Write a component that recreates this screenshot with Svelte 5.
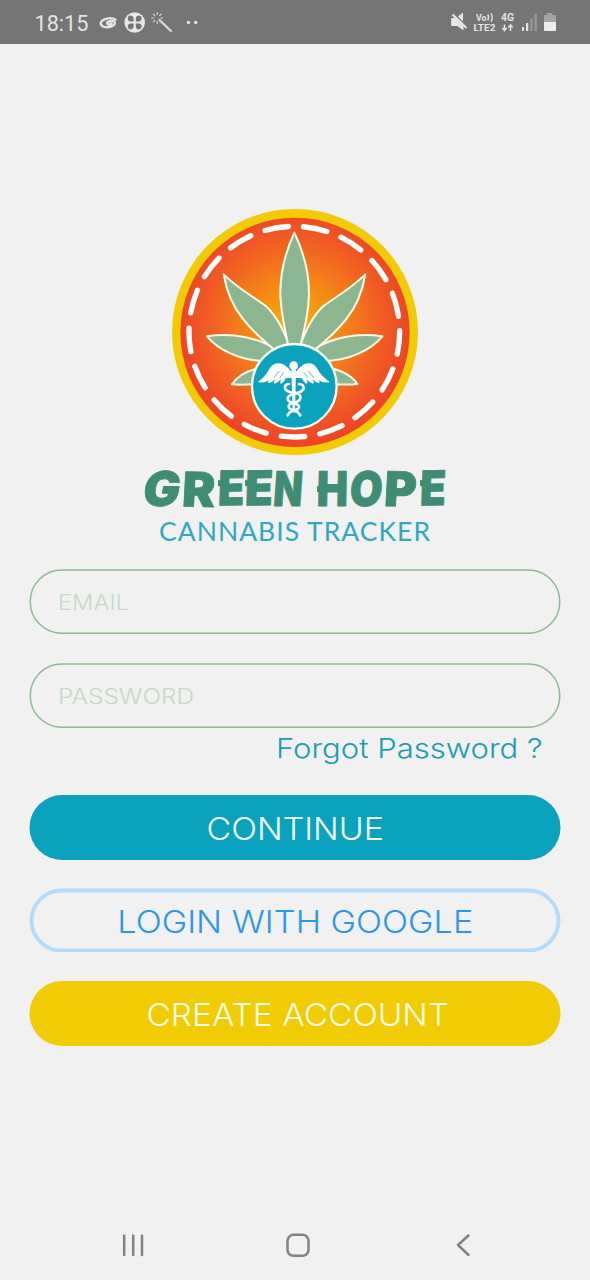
<script>
  const title = [
    { c: 'G', x: 141, s: 1.02, y: 506, r: 0, k: -9 },
    { c: 'R', x: 181.5, s: 1.03, y: 506.5, r: 1, k: -2 },
    { c: 'E', x: 217.5, s: 0.9, y: 505.5, r: -1, k: -3 },
    { c: 'E', x: 244.5, s: 0.95, y: 505.5, r: -1, k: -3 },
    { c: 'N', x: 272.5, s: 0.79, y: 505.5, r: 0, k: -4 },
    { c: 'H', x: 316.5, s: 0.87, y: 505.5, r: 0, k: -1 },
    { c: 'O', x: 348.5, s: 0.88, y: 505.5, r: 0, k: -5 },
    { c: 'P', x: 383.5, s: 1.03, y: 506, r: 1, k: -2 },
    { c: 'E', x: 419.5, s: 0.88, y: 505.5, r: -1, k: -3 }
  ];
  const fields = [
    { text: 'EMAIL', x: 29, w: 71 },
    { text: 'PASSWORD', x: 29, w: 136 }
  ];
  const rays = [0, 45, 90, 135, 180, 225, 270, 315];
</script>

<div class="screen">
  <header class="status">
    <svg width="590" height="44" viewBox="0 0 590 44">
      <text class="clock" x="34.5" y="30.5" textLength="54" lengthAdjust="spacingAndGlyphs">18:15</text>
      <path fill="none" stroke="#e4e4e4" stroke-linecap="round" stroke-width="2.4" d="M115.500 19.500C111 16.500 102 19 100.800 22.800C100 27 106.500 28 111 26.500C116 24.800 116 21 112 21C108.500 21 106 22.800 107.500 24C108.500 24.700 110.500 24.300 111.500 23.500" />
      <circle cx="134.700" cy="22.500" r="10.300" fill="#e8e8e8" />
      <path fill="#757575" d="M133.600 21.400h-3.200a2.900 2.900 0 1 1 3.200-3.200zM135.800 21.400v-3.200a2.900 2.900 0 1 1 3.200 3.200zM133.600 23.600v3.200a2.900 2.900 0 1 1-3.200-3.200zM135.800 23.600h3.200a2.900 2.900 0 1 1-3.200 3.200z" />
      <path d="M159.500 20l11.500 11" stroke="#dedede" stroke-width="2.200" stroke-linecap="round" />
      {#each rays as r}
        <path d="M157.300 14.500v-2" transform={`rotate(${r} 157.300 18)`} stroke="#d4d4d4" stroke-width="1.200" stroke-linecap="round" />
      {/each}
      <circle cx="188.500" cy="22.500" r="1.700" fill="#e4e4e4" />
      <circle cx="195.700" cy="22.500" r="1.700" fill="#e4e4e4" />

      <path d="M451.200 18h3.800l8.500 8.500v4l-6-4.500h-6.300zM458 16.500l5-4v9z" fill="#e6e6e6" />
      <path d="M452.500 14.500l14 13.500" stroke="#e6e6e6" stroke-width="2.200" />
      <text class="net" x="476" y="20.500" textLength="10.500" lengthAdjust="spacingAndGlyphs">Vo</text>
      <path d="M487.700 14.500q2 2.800 0 5.800M490.900 13.300q3 4 0 8.200" fill="none" stroke="#e2e2e2" stroke-width="1.400" />
      <text class="net" x="473.500" y="30.500" textLength="22" lengthAdjust="spacingAndGlyphs">LTE2</text>
      <text class="net g4" x="501" y="21" textLength="13" lengthAdjust="spacingAndGlyphs">4G</text>
      <path d="M504.500 24.500v5.500M502.300 28l2.200 2.500 2.200-2.500M510.500 31v-5.500M508.300 27.500l2.200-2.500 2.200 2.500" fill="none" stroke="#e2e2e2" stroke-width="1.500" />
      <rect x="522" y="27" width="2" height="4" fill="#e2e2e2" />
      <rect x="526" y="23" width="2.300" height="8" fill="#e2e2e2" />
      <rect x="530.300" y="18.500" width="2.300" height="12.500" fill="#999" />
      <rect x="534.500" y="14" width="2.300" height="17" fill="#999" />
      <path d="M547 13h5.500v2h3.500v7h-12v-7h3z" fill="#a4a4a4" />
      <path d="M544 22h12v8q0 1-1 1h-10q-1 0-1-1z" fill="#ececec" />
    </svg>
  </header>

  <main>
    <svg class="logo" width="260" height="260" viewBox="0 0 780 780">
      <defs>
        <radialGradient id="sun" gradientUnits="userSpaceOnUse" cx="390" cy="380" r="345">
          <stop offset="0" stop-color="#f9b208" />
          <stop offset=".35" stop-color="#f58d14" />
          <stop offset=".7" stop-color="#f16422" />
          <stop offset="1" stop-color="#ee4526" />
        </radialGradient>
      </defs>
      <circle cx="390" cy="396" r="369" fill="#f2cb05" />
      <circle cx="390" cy="397" r="344" fill="url(#sun)" />
      <circle cx="388" cy="395" r="316" fill="none" stroke="#fff" stroke-width="16" stroke-linecap="round" stroke-dasharray="71 45.794" transform="rotate(-.5 388 395)" />
      <g fill="#8cb592" stroke="#fffbe8" stroke-width="6" stroke-linejoin="round">
        <path d="M290 502C250 510 218 526 201 553Q230 556 285 551zM486 502C526 510 560 526 577 552Q550 556 495 551z" />
        <path d="M335 450C285 415 205 396 126 409C160 450 225 482 300 483zM443 450C493 415 573 396 652 409C618 450 553 482 478 483z" />
        <path d="M374 440C357 392 336 350 305 320C268 292 218 265 176 223C184 270 205 322 235 358C262 392 292 420 335 455zM404 440C421 392 442 350 473 320C510 292 559 265 601 223C593 270 573 322 543 358C516 392 486 420 443 455z" />
        <path d="M388 98C364 150 345 215 346 285C348 340 358 385 372 445H404C419 385 430 340 432 285C433 215 413 150 388 98z" />
      </g>
      <circle cx="388" cy="559" r="127" fill="#0ba2bd" stroke="#f8fffb" stroke-width="7" />
      <g fill="#fff">
        <circle cx="386" cy="497" r="13" />
        <path d="M379 509h14l-3 128h-7z" />
        <path d="M382 518Q373 505 355 493Q331 483 315 503Q303 527 279 546Q296 551 311 541Q307 549 310 550Q322 548 330 538Q324 549 329 551Q341 547 348 537Q342 550 350 551Q358 546 362 535Q370 534 382 533zM390 518Q399 505 417 493Q441 483 455 503Q468 527 494 546Q477 551 462 541Q466 549 463 550Q451 548 443 538Q449 549 444 551Q432 547 425 537Q431 550 423 551Q415 546 410 535Q402 534 390 533z" />
      </g>
      <path d="M327 533l16-20M344 534l12-17M446 533l-16-20M429 534l-12-17" stroke="#0ba2bd" stroke-width="2" />
      <g fill="none" stroke="#fff" stroke-width="8" stroke-linecap="round">
        <path d="M372 552Q356 553 361 568Q370 578 391 578Q412 585 405 599Q397 608 381 609Q365 616 374 626L398 636L406 646" />
        <path d="M402 552Q419 553 415 568Q407 578 388 581Q364 587 369 600Q377 610 394 612Q408 619 398 627L374 637L368 646" />
      </g>
    </svg>

    <svg class="brand" width="590" height="109" viewBox="0 460 590 109">
      <g class="name">
        {#each title as l}
          <text transform={`translate(${l.x} ${l.y}) rotate(${l.r}) skewX(${l.k}) scale(${l.s} 1)`}>{l.c}</text>
        {/each}
      </g>
      <path d="M218 480l6 1v6l-6-1zM245 480l6 1v6l-6-1zM317 486l6 1v6l-6-1zM420 480l6 1v6l-6-1z" fill="#3e8c73" />
      <text class="sub" x="159" y="540.500" textLength="271" lengthAdjust="spacing">CANNABIS TRACKER</text>
    </svg>

    <div class="form">
      {#each fields as f}
        <svg class="row" viewBox="0 0 532 65">
          <rect x="1.200" y="1" width="529.600" height="63.300" rx="31.650" fill="none" stroke="#8dba92" stroke-width="1.500" />
          <text class="hint" x={f.x} y="40.500" textLength={f.w} lengthAdjust="spacingAndGlyphs">{f.text}</text>
        </svg>
      {/each}
      <svg class="forgot" viewBox="0 0 532 38">
        <text x="247" y="29.500" textLength="266.500" lengthAdjust="spacingAndGlyphs">Forgot Password ?</text>
      </svg>
      <svg class="row" viewBox="0 0 532 65">
        <rect x=".5" width="531" height="65" rx="32.500" fill="#0ba2bd" />
        <text class="act" fill="#f4ffff" x="177.500" y="44.500" textLength="177.500" lengthAdjust="spacingAndGlyphs">CONTINUE</text>
      </svg>
      <svg class="row google" viewBox="0 0 532 64">
        <rect x="2.500" y="2.600" width="527" height="60" rx="30" fill="none" stroke="#b5dbfb" stroke-width="4" />
        <text class="act" fill="#2b96ea" x="88.300" y="45" textLength="356" lengthAdjust="spacingAndGlyphs">LOGIN WITH GOOGLE</text>
      </svg>
      <svg class="row" viewBox="0 0 532 65">
        <rect x=".5" width="531" height="65" rx="32.500" fill="#f1cb03" />
        <text class="act" fill="#fffde6" x="117.500" y="45" textLength="302.500" lengthAdjust="spacingAndGlyphs">CREATE ACCOUNT</text>
      </svg>
    </div>
  </main>

  <nav>
    <svg width="590" height="70" viewBox="0 1210 590 70" fill="none" stroke="#828282" stroke-width="2.500" stroke-linecap="round" stroke-linejoin="round">
      <path d="M124.200 1235.500v19.500M133.200 1235.500v19.500M142 1235.500v19.500" />
      <rect x="287.500" y="1234.800" width="21" height="21" rx="6" />
      <path d="M468.500 1235.500l-10.500 9.500 10.500 10" />
    </svg>
  </nav>
</div>

<style>
  :global(body) { margin: 0; background: #f1f1f1; }
  .screen {
    width: 590px;
    height: 1280px;
    display: flex;
    flex-direction: column;
    background: #f1f1f1;
    overflow: hidden;
    font-family: Inter, "Noto Sans", sans-serif;
  }
  svg { display: block; flex: none; }
  .status { height: 44px; background: #757575; }
  .clock { font: 400 22px Roboto, sans-serif; fill: #e4e4e4; }
  .net { font: 700 9.500px Roboto, sans-serif; fill: #e2e2e2; }
  .g4 { font-size: 11px; }
  main { flex: 1; display: flex; flex-direction: column; align-items: center; padding-top: 156px; }
  .brand { overflow: visible; }
  .name text {
    font: 900 48px Inter, sans-serif;
    fill: #3e8c73;
    stroke: #3e8c73;
    stroke-width: .8;
    stroke-linejoin: round;
  }
  .sub { font: 400 26.500px Lato, sans-serif; fill: #2fa9c0; }
  .form { width: 532px; display: flex; flex-direction: column; gap: 29px; }
  .row { width: 532px; height: 65px; }
  .google { height: 64px; margin-top: -1px; }
  .hint { font-size: 21.500px; font-weight: 300; fill: #c3dac6; }
  .forgot { width: 532px; height: 38px; margin-top: -29px; }
  .forgot text { font-size: 27.500px; font-weight: 300; fill: #1b9cb5; }
  .act { font-size: 31.500px; font-weight: 300; }
  nav { height: 70px; }
</style>
